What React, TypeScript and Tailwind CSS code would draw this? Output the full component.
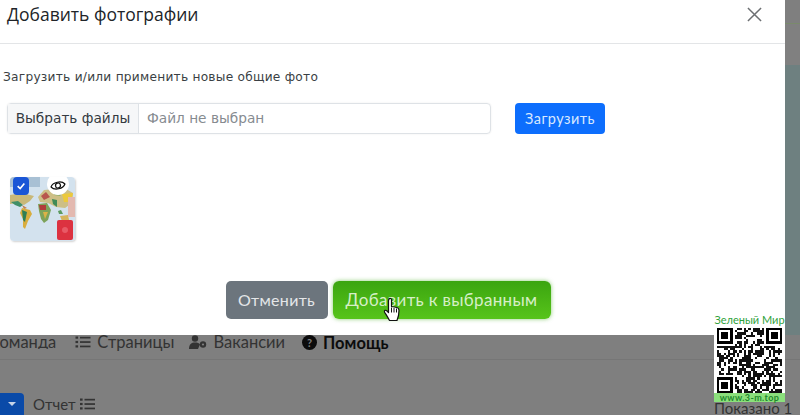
import React from "react";

const QR_SIZE = 29;
function qrCells(): [number, number][] {
  const cells: [number, number][] = [];
  let s = 12345;
  const inFinder = (x: number, y: number) =>
    (x < 8 && y < 8) || (x >= QR_SIZE - 8 && y < 8) || (x < 8 && y >= QR_SIZE - 8);
  for (let y = 0; y < QR_SIZE; y++) {
    for (let x = 0; x < QR_SIZE; x++) {
      s = (s * 1103515245 + 12345) & 0x7fffffff;
      if (!inFinder(x, y) && (s >> 16) % 100 < 52) cells.push([x, y]);
    }
  }
  return cells;
}
const cells = qrCells();

function Finder({ x, y }: { x: number; y: number }) {
  return (
    <g>
      <rect x={x} y={y} width={7} height={7} fill="#000" />
      <rect x={x + 1} y={y + 1} width={5} height={5} fill="#fff" />
      <rect x={x + 2} y={y + 2} width={3} height={3} fill="#000" />
    </g>
  );
}

function Qr() {
  return (
    <svg viewBox={`0 0 ${QR_SIZE} ${QR_SIZE}`} className="block h-[65px] w-[65px]" shapeRendering="crispEdges">
      <rect width={QR_SIZE} height={QR_SIZE} fill="#fff" />
      {cells.map(([x, y]) => (
        <rect key={`${x}-${y}`} x={x} y={y} width={1} height={1} fill="#111" />
      ))}
      <Finder x={0} y={0} />
      <Finder x={QR_SIZE - 7} y={0} />
      <Finder x={0} y={QR_SIZE - 7} />
    </svg>
  );
}

function WorldMap() {
  return (
    <svg viewBox="0 0 65 64" className="block h-[64px] w-[65px]">
      <defs>
        <filter id="mapblur" filterUnits="userSpaceOnUse" x="0" y="0" width="65" height="64">
          <feGaussianBlur stdDeviation="0.55" />
        </filter>
      </defs>
      <rect width="65" height="64" fill="#d3e2ee" />
      <g filter="url(#mapblur)">
        <rect x="0" y="0" width="30" height="10" fill="#a8c0d4" />
        <path d="M0 18 L12 16 L24 19 L20 24 L14 28 L8 26 L0 27 Z" fill="#c9b878" />
        <path d="M1 25 L8 24 L13 28 L10 30 L5 28 Z" fill="#3f8f68" />
        <path d="M12 28 L17 31 L14 32 Z" fill="#c77f4a" />
        <path d="M12 31 L20 33 L22 37 L18 44 L15 52 L13 50 L13 42 L10 36 Z" fill="#d8ad3e" />
        <path d="M12 33 L17 35 L15 45 L13 43 Z" fill="#2f7f55" />
        <path d="M28 20 L34 13 L44 12 L56 12 L63 16 L62 26 L55 31 L46 30 L38 26 L30 25 Z" fill="#cdbf86" />
        <path d="M31 19 L36 15 L40 20 L34 23 Z" fill="#b8564e" />
        <path d="M44 13 L54 14 L50 19 L44 18 Z" fill="#8fae6c" />
        <path d="M52 17 L63 16 L61 25 L54 25 Z" fill="#ecc93a" />
        <path d="M42 22 L47 23 L47 30 L43 27 Z" fill="#3f8a58" />
        <path d="M28 27 L37 26 L41 33 L38 43 L34 46 L31 42 L29 34 Z" fill="#7da35a" />
        <path d="M29 28 L36 28 L36 33 L30 33 Z" fill="#b03e3a" />
        <path d="M33 35 L38 35 L35 42 Z" fill="#dcb246" />
        <path d="M48 34 L51 33 L53 37 L49 37 Z" fill="#5c9a60" />
        <path d="M50 39 L58 38 L59 43 L52 44 Z" fill="#d6b45c" />
        <rect x="58" y="20" width="7" height="20" fill="#e3b9b0" />
        <rect x="47" y="43" width="16" height="20" rx="2" fill="#dc3040" />
        <circle cx="55" cy="53" r="3" fill="#e85a66" />
      </g>
    </svg>
  );
}

function ListIcon({ className }: { className: string }) {
  return (
    <svg viewBox="0 0 15 12" className={className} fill="currentColor">
      <rect x="0" y="0.5" width="2.6" height="2.2" />
      <rect x="4.5" y="0.8" width="10.5" height="1.7" />
      <rect x="0" y="4.9" width="2.6" height="2.2" />
      <rect x="4.5" y="5.2" width="10.5" height="1.7" />
      <rect x="0" y="9.3" width="2.6" height="2.2" />
      <rect x="4.5" y="9.6" width="10.5" height="1.7" />
    </svg>
  );
}

export default function App() {
  return (
    <div
      className="relative flex h-[415px] w-[800px] flex-col overflow-hidden bg-[#7f7f7f]"
      style={{ fontFamily: '"DejaVu Sans", sans-serif' }}
    >
      <div className="flex h-[335px] shrink-0">
        <div className="flex w-[785px] flex-col bg-white">
          <div className="flex h-[44px] shrink-0 items-center justify-between border-b border-[#e3e5e7] pl-[7px] pr-[23px]">
            <h1 className="-translate-y-[7px] font-['Open_Sans',sans-serif] text-[17.5px] leading-none text-[#212529]">
              Добавить фотографии
            </h1>
            <svg viewBox="0 0 16 16" className="h-[15px] w-[15px] -translate-y-[7px] text-[#6c6f72]" fill="none" stroke="currentColor" strokeWidth="1.6">
              <path d="M1 1 L15 15 M15 1 L1 15" />
            </svg>
          </div>

          <p className="mt-[25px] pl-[3px] text-[12.2px] leading-[16px] tracking-[0.02em] text-[#3a3f44]">
            Загрузить и/или применить новые общие фото
          </p>

          <div className="mt-[18px] flex items-center pl-[7px]">
            <div className="flex h-[31px] w-[484px] items-center rounded-[4px] border border-[#dee2e6] text-[13.7px] shadow-[0_0_2px_rgba(0,0,0,0.08)]">
              <span className="flex h-full w-[131px] items-center justify-center border-r border-[#dee2e6] bg-[#f6f7f8] text-[#343a40]">
                Выбрать файлы
              </span>
              <span className="pl-[8px] text-[#868b90]">Файл не выбран</span>
            </div>
            <button className="ml-[24px] flex h-[31px] w-[90px] items-center justify-center rounded-[4px] bg-[#0d6efd] font-['Lato',sans-serif] text-[14.5px] tracking-[0.03em] text-[#d8e8ff]">
              Загрузить
            </button>
          </div>

          <div className="relative ml-[10px] mt-[43px] h-[64px] w-[65px] overflow-hidden rounded-[4px] shadow-[1px_1px_2px_rgba(0,0,0,0.18)]">
            <WorldMap />
            <span className="absolute left-[3px] top-0 flex h-[18px] w-[16px] items-center justify-center rounded-[4px] bg-[#1a56d6]">
              <svg viewBox="0 0 12 12" className="h-[10px] w-[10px]" fill="none" stroke="#fff" strokeWidth="2">
                <path d="M2 6.2 L5 9 L10 3" />
              </svg>
            </span>
            <span className="absolute left-[37px] top-[-4px] flex h-[22px] w-[22px] items-center justify-center rounded-full bg-white pt-[3px]">
              <svg viewBox="0 0 18 14" className="h-[13px] w-[16px] -rotate-12" fill="none" stroke="#111" strokeWidth="1.4">
                <path d="M1 7 C4 2 14 2 17 7 C14 12 4 12 1 7 Z" />
                <circle cx="9" cy="7" r="2.8" />
              </svg>
            </span>
          </div>

          <div className="mt-[40px] flex justify-center gap-[5px] pr-[9px] font-['Lato',sans-serif] tracking-[0.02em]">
            <button className="h-[38px] w-[102px] rounded-[5px] bg-[#6c757d] text-[16px] text-[#e4e6e8]">Отменить</button>
            <button className="h-[38px] w-[218px] rounded-[6px] bg-gradient-to-b from-[#3ba510] to-[#57c41a] text-[17px] text-[#d6efc6] shadow-[0_0_4px_rgba(60,170,20,0.6)]">
              Добавить к выбранным
            </button>
          </div>
        </div>

        <div className="flex flex-1 flex-col">
          <div className="h-[23px] bg-[#7f7f7f]" />
          <div className="h-[1px] bg-[#7a8a6c]" />
          <div className="h-[41px] bg-[#808080]" />
          <div className="flex-1 bg-[#6e8080]" />
        </div>
      </div>

      <div className="flex h-[25px] shrink-0 items-start gap-[16px] border-b border-[#767676] font-['Lato',sans-serif] text-[16.5px] leading-[14px] text-[#333]">
        <span className="-ml-[11px] mr-[3px] whitespace-nowrap [clip-path:inset(0_0_0_11px)]">Команда</span>
        <span className="mr-[-1px] flex items-center gap-[6px]">
          <ListIcon className="h-[12px] w-[16px]" />
          Страницы
        </span>
        <span className="mr-[1px] flex items-center gap-[6px]">
          <svg viewBox="0 0 18 14" className="h-[14px] w-[18px]" fill="currentColor">
            <circle cx="6" cy="3.5" r="3.2" />
            <path d="M0 14 C0 9 2.5 7.5 6 7.5 C8.5 7.5 10 8 11 9.5 L9 14 Z" />
            <circle cx="14" cy="9.5" r="3.2" />
            <circle cx="14" cy="9.5" r="1.1" fill="#7f7f7f" />
          </svg>
          Вакансии
        </span>
        <span className="flex items-center gap-[6px] font-bold text-[#0c0c0c]">
          <span className="flex h-[15px] w-[15px] items-center justify-center rounded-full bg-[#0c0c0c] text-[11px] leading-none text-[#7f7f7f]">?</span>
          Помощь
        </span>
      </div>

      <div className="mt-[33px] flex items-center gap-[9px] font-['Lato',sans-serif] text-[15px] text-[#333]">
        <span className="flex h-[22px] w-[24px] items-start justify-center rounded-tr-[4px] bg-[#0a4aa8] pt-[9px]">
          <span className="h-0 w-0 border-x-[4px] border-t-[4px] border-x-transparent border-t-[#c5d3e8]" />
        </span>
        <span className="flex items-center gap-[4px]">
          Отчет
          <ListIcon className="h-[12px] w-[15px]" />
        </span>
      </div>

      <div className="absolute left-[714px] top-[312px] flex w-[71px] flex-col items-center bg-white font-['Lato',sans-serif]">
        <span className="h-[16px] whitespace-nowrap text-[11px] leading-[16px] text-[#2fa23c]">Зеленый Мир</span>
        <Qr />
        <span className="h-[9px] w-full whitespace-nowrap bg-[#8be07c] text-center text-[9px] font-bold leading-[9px] tracking-[0.04em] text-[#1f8a2c]">www.3-m.top</span>
      </div>
      <span className="absolute left-[714px] top-[402px] h-[13px] whitespace-nowrap font-['Lato',sans-serif] text-[15px] leading-[13px] text-[#333]">Показано 1</span>

      <svg viewBox="0 0 18 24" className="absolute left-[383px] top-[297px] h-[25px] w-[18px]">
        <path
          d="M6 1.5 C7 0.5 8.5 1 8.5 2.5 L8.5 9 L14 10 C15.5 10.5 16 11.5 16 13 L15.5 18 C15 20 14.5 21 14 23 L6.5 23 C5 20 3 17 1.5 14.5 C1 13 2.5 12 4 13.5 L5.5 15 L5.5 3 Z"
          fill="#fff"
          stroke="#111"
          strokeWidth="1.2"
          strokeLinejoin="round"
        />
        <path d="M8.5 10 V15 M11 10.5 V15 M13.5 11 V15" stroke="#111" strokeWidth="1" />
      </svg>
    </div>
  );
}
